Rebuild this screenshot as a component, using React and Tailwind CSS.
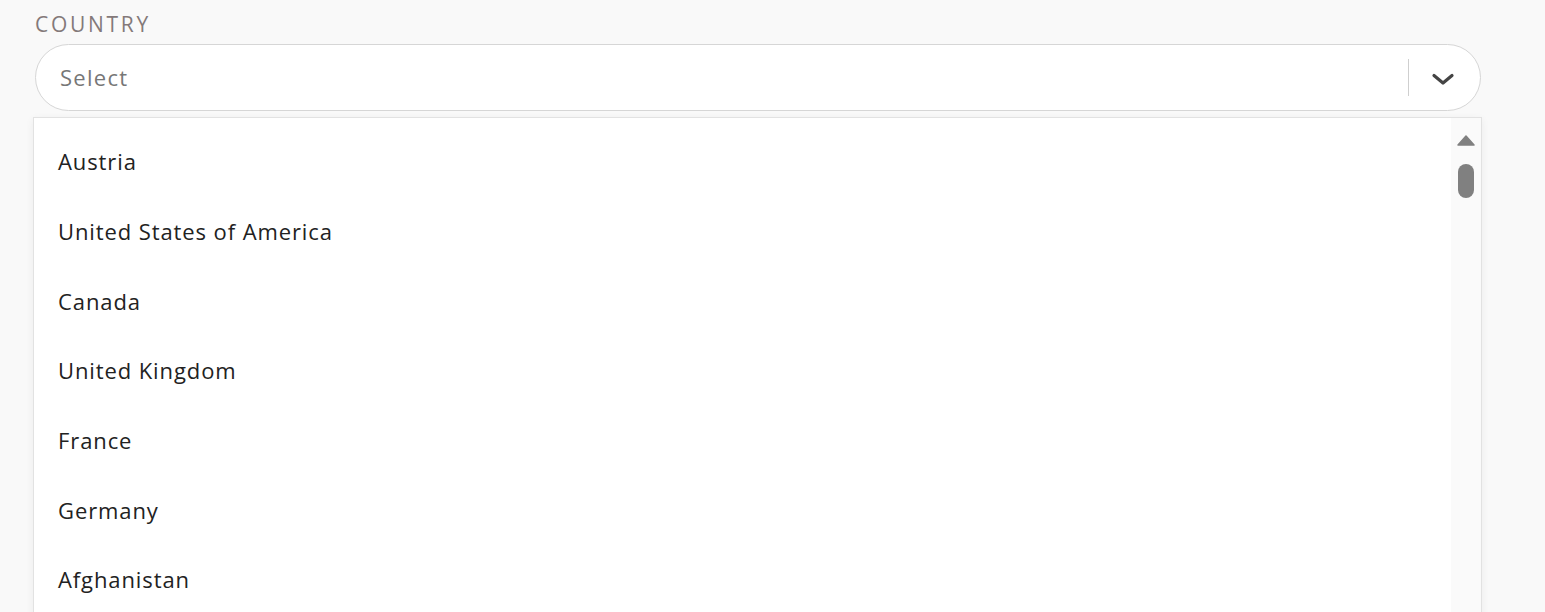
import React from 'react';

const countries = [
  'Austria',
  'United States of America',
  'Canada',
  'United Kingdom',
  'France',
  'Germany',
  'Afghanistan',
];

export default function App() {
  return (
    <div className="h-[612px] overflow-hidden bg-[#f9f9f9] font-['Open_Sans',sans-serif]">
      <div className="w-[1449px] ml-[33px] pt-[11px]">
        {/* Label */}
        <div className="ml-[2px] text-[21px] leading-[27px] text-[#84797a] tracking-[2.7px]">COUNTRY</div>

        {/* Select control */}
        <div className="ml-[2px] mr-[1px] mt-[6px] h-[67px] rounded-full border border-[#d6d6d6] bg-white flex items-center pl-[24px] pr-[25px]">
          <div className="flex-1 text-[22px] text-[#777] tracking-[1.3px]">Select</div>
          <div className="w-px h-[37px] bg-[#cfcfcf] mr-[22px]" />
          <svg width="24" height="14" viewBox="0 0 24 14" className="mt-[2px]">
            <path d="M3 3.5l9 7.5 9-7.5" fill="none" stroke="#444" strokeWidth="3.2" strokeLinecap="round" strokeLinejoin="round" />
          </svg>
        </div>

        {/* Menu */}
        <div className="mt-[6px] h-[520px] border border-[#e2e2e2] bg-white shadow-[0_2px_8px_rgba(0,0,0,0.06)] flex">
          <ul className="flex-1 pt-[9px]">
            {countries.map((c) => (
              <li key={c} className="h-[69.7px] flex items-center pl-[24px] text-[22px] text-[#222] tracking-[0.9px]">
                {c}
              </li>
            ))}
          </ul>
          <div className="w-[30px] bg-[#fafafa] flex flex-col items-center pt-[17px]">
            <svg width="18" height="11" viewBox="0 0 18 11">
              <path d="M9 1L17 10H1Z" fill="#808080" stroke="#808080" strokeLinejoin="round" strokeWidth="1.5" />
            </svg>
            <div className="mt-[18px] w-[16px] h-[34px] rounded-full bg-[#808080]" />
          </div>
        </div>
      </div>
    </div>
  );
}
